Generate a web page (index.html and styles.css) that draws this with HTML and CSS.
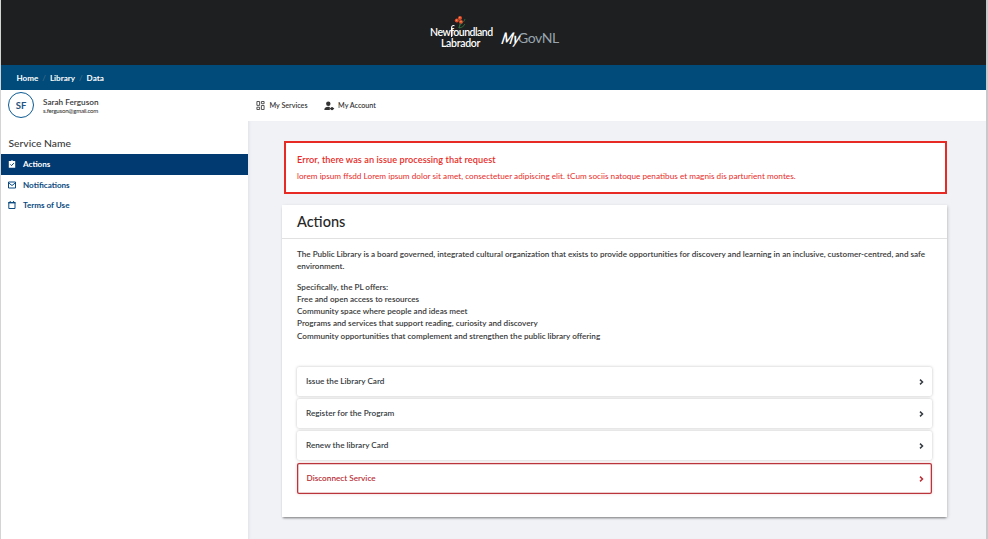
FILE: index.html
```html
<!DOCTYPE html>
<html lang="en">
<head>
<meta charset="utf-8">
<title>MyGovNL</title>
<link rel="stylesheet" href="styles.css">
</head>
<body>
<div class="page">
  <header class="masthead">
    <div class="province">
      <svg class="flower" width="16" height="27" viewBox="0 0 16 27" fill="none">
        <path d="M8 7Q10 10 8 15M14 6C13 10 9 10 8 15Q12 15 14 11" stroke="#36713a" stroke-width=".9"/>
        <path d="M.6 24V15Q.6 12 3.500 12.700" stroke="#fff" stroke-width="1.100"/>
        <g fill="#e44b2b"><circle cx="9" cy="5" r="2"/><circle cx="5.800" cy="7.500" r="2"/><circle cx="10" cy="8.800" r="1.900"/></g>
        <g fill="#f29a55"><circle cx="8.800" cy="4.500" r=".7"/><circle cx="5.600" cy="7.200" r=".7"/><circle cx="10" cy="8.500" r=".7"/></g>
      </svg>
      <div class="province-top">Newfoundland</div>
      <div class="province-bottom">Labrador</div>
    </div>
    <div class="product"><div class="my">My</div><div class="gov">GovNL</div></div>
  </header>
  <nav class="crumbs"><a>Home</a><i>/</i><a>Library</a><i>/</i><a>Data</a></nav>
  <div class="userbar">
    <div class="user">
      <div class="avatar">SF</div>
      <div class="who"><div class="name">Sarah Ferguson</div><div class="mail">s.ferguson@gmail.com</div></div>
    </div>
    <nav class="top-links">
      <a class="services"><svg width="9" height="9" viewBox="0 0 9 9" fill="none" stroke="#444" stroke-width=".9"><path d="M.9.5h2.700v3.900H.9zM5.400.5h2.700v2.200H5.400zM.9 6.200h2.700v2.300H.9zM5.400 4.500h2.700v4H5.400z"/></svg>My Services</a>
      <a class="account"><svg width="11" height="10" viewBox="0 0 11 10" fill="#333"><circle cx="4.300" cy="2.700" r="2.200"/><path d="M.3 9C.3 6.500 2 5.700 4.300 5.700q.9 0 1.500.2V9z"/><circle cx="8" cy="7.600" r="1.600"/><path d="M5.900 7.100h4.200v1H5.900z"/></svg>My Account</a>
    </nav>
  </div>
  <div class="columns">
    <aside class="side">
      <h2>Service Name</h2>
      <a class="item active"><svg width="8" height="8" viewBox="0 0 8 8"><path d="M.8 1h2Q4-.6 5.200 1h2v6.800H.8z" fill="#fff"/><path d="M2.300 4.400l1.200 1.200 2.300-2.400" fill="none" stroke="#003a70"/></svg>Actions</a>
      <a class="item"><svg width="8" height="8" viewBox="0 0 8 8" fill="none" stroke="#0b4a80"><path d="M.5 1h7v6h-7zM.7 2L4 4.500 7.300 2"/></svg>Notifications</a>
      <a class="item"><svg width="8" height="8" viewBox="0 0 8 8" fill="none" stroke="#0b4a80"><path d="M.8 1.500h6.200v6H.8z"/><path d="M.3 1.700h7.200" stroke-width="1.400"/><path d="M2.200 0v1.500M5.600 0v1.500"/></svg>Terms of Use</a>
    </aside>
    <main class="main">
      <section class="alert"><h3>Error, there was an issue processing that request</h3><p>lorem ipsum ffsdd Lorem ipsum dolor sit amet, consectetuer adipiscing elit. tCum sociis natoque penatibus et magnis dis parturient montes.</p></section>
      <section class="card">
        <h1>Actions</h1>
        <div class="body">
          <p class="intro">The Public Library is a board governed, integrated cultural organization that exists to provide opportunities for discovery and learning in an inclusive, customer-centred, and safe<br>environment.</p>
          <p class="offers">Specifically, the PL offers:<br>Free and open access to resources<br>Community space where people and ideas meet<br>Programs and services that support reading, curiosity and discovery<br>Community opportunities that complement and strengthen the public library offering</p>
          <div class="actions">
            <a class="action"><span>Issue the Library Card</span><svg width="5" height="6" viewBox="0 0 5 6"><path d="M1 .6L3.500 3 1 5.400"/></svg></a>
            <a class="action"><span>Register for the Program</span><svg width="5" height="6" viewBox="0 0 5 6"><path d="M1 .6L3.500 3 1 5.400"/></svg></a>
            <a class="action"><span>Renew the library Card</span><svg width="5" height="6" viewBox="0 0 5 6"><path d="M1 .6L3.500 3 1 5.400"/></svg></a>
            <a class="action danger"><span>Disconnect Service</span><svg width="5" height="6" viewBox="0 0 5 6"><path d="M1 .6L3.500 3 1 5.400"/></svg></a>
          </div>
        </div>
      </section>
    </main>
  </div>
</div>
</body>
</html>
```
FILE: styles.css
```css
* { box-sizing: border-box; }
body { margin: 0; font-family: Lato, "Liberation Sans", sans-serif; font-weight: 500; color: #383838; overflow: hidden; }
h1, h2, h3, p { margin: 0; font-weight: 500; }
svg { display: block; flex: none; }
.page { height: 539px; display: flex; flex-direction: column; border-left: 1px solid #d4d4d4; border-right: 2px solid #c8c9cb; background: #fff; }
.masthead { height: 65px; flex: none; background: #1d1f21; color: #fff; display: flex; padding-left: 428px; }
.province { width: 64px; padding-top: 27px; position: relative; white-space: nowrap; font-weight: 600; line-height: 11px; }
.flower { position: absolute; left: 22px; top: 13px; }
.province-top { font-size: 10.500px; letter-spacing: -.5px; padding-left: 1px; }
.province-bottom { font-size: 10.500px; line-height: 10px; letter-spacing: -.3px; padding-left: 12px; }
.product { padding: 29px 0 0 7px; font-size: 15px; line-height: 18px; white-space: nowrap; display: flex; }
.my { width: 18px; font-size: 16px; font-weight: 700; transform: translateX(-3px) skewX(-18deg) scaleX(.76); transform-origin: 0 70%; }
.gov { color: #99a4ad; font-weight: 400; font-size: 14px; letter-spacing: -.4px; }
.crumbs { height: 25px; flex: none; background: #004b7a; color: #fff; display: flex; align-items: center; padding-left: 15.500px; font-size: 8.050px; font-weight: 700; }
.crumbs i { color: #4d7187; font-style: normal; font-weight: 400; margin: 0 4px; }
.userbar { height: 31px; flex: none; display: flex; }
.user { width: 247px; display: flex; padding: 2px 0 0 7px; }
.avatar { width: 26px; height: 26px; border: 1px solid #0b5a94; border-radius: 50%; color: #245580; font-size: 9.500px; font-weight: 700; line-height: 25px; text-align: center; }
.who { padding: 6px 0 0 9px; white-space: nowrap; }
.name { font-size: 8.200px; line-height: 9px; font-weight: 600; }
.mail { font-size: 6.100px; letter-spacing: -.23px; line-height: 7px; }
.top-links { display: flex; padding-left: 8px; height: 31px; align-items: center; font-size: 7.150px; font-weight: 600; white-space: nowrap; }
.top-links a { display: flex; align-items: center; gap: 4.500px; }
.top-links .account { margin-left: 16.500px; gap: 3px; }
.columns { flex: 1; display: flex; min-height: 0; }
.side { width: 247px; padding-top: 15px; }
.side h2 { height: 18px; padding-left: 7.500px; font-size: 10.300px; line-height: 15px; }
.item { height: 20.500px; padding-left: 7px; display: flex; align-items: center; gap: 7px; color: #0b4a80; font-size: 8.100px; font-weight: 700; }
.item.active { background: #003a70; color: #fff; }
.main { flex: 1; background: #f0f2f6; box-shadow: inset 3px 0 3px -2px #dfe1e6; padding: 20px 39px 0 34px; }
.alert { height: 53px; margin-left: 2px; background: #fff; border: 2px solid #e82a25; color: #e72c29; padding: 11px; white-space: nowrap; }
.alert h3 { font-size: 9.200px; line-height: 12px; font-weight: 600; letter-spacing: .06px; }
.alert p { font-size: 8.220px; line-height: 12px; margin-top: 4px; font-weight: 400; }
.card { margin-top: 11px; height: 312px; background: #fff; box-shadow: 0 2px 2px -1px rgba(0,0,0,.4), 1px 1px 3px rgba(0,0,0,.16); }
.card h1 { height: 34px; border-bottom: 1px solid #e1e1e1; padding-left: 15px; font-size: 14.500px; line-height: 34px; color: #272727; }
.body { padding: 9px 15px 0 15px; font-size: 8.120px; line-height: 12.300px; white-space: nowrap; }
.body p { font-weight: 600; }
.offers { margin-top: 8px; }
.actions { margin-top: 25px; display: flex; flex-direction: column; gap: 3px; }
.action { height: 29px; display: flex; align-items: center; justify-content: space-between; padding: 0 8px 0 9px; border-radius: 2px; box-shadow: 0 0 3px rgba(0,0,0,.25); background: #fff; color: #353b42; font-weight: 600; font-size: 8.200px; }
.action svg { fill: none; stroke: currentColor; stroke-width: 1.500; }
.action.danger { height: 31px; box-shadow: inset 0 0 0 1.300px #b9343b, 0 0 3px rgba(185,52,59,.25); padding: 0 8px 0 9.500px; color: #b92f37; }
```
